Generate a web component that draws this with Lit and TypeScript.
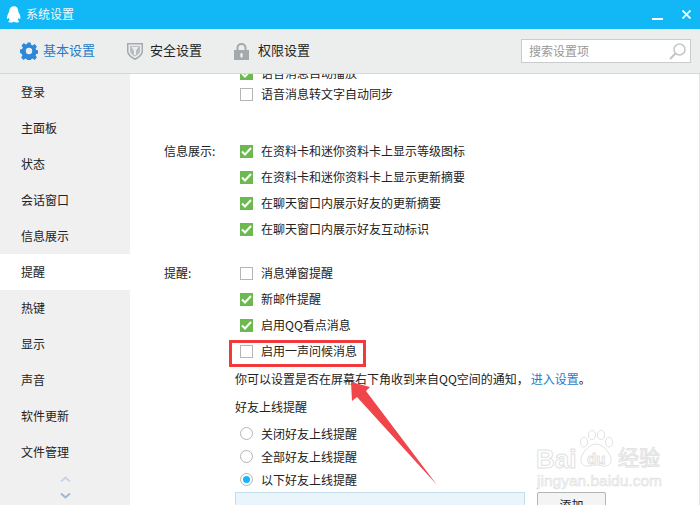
import { LitElement, html, css, svg } from "lit";
import { customElement } from "lit/decorators.js";

const SIDE = ["登录","主面板","状态","会话窗口","信息展示","提醒","热键","显示","声音","软件更新","文件管理"];

const gear = svg`<svg width="18" height="18" viewBox="0 0 18 18"><path fill="#2f87d9" fill-rule="evenodd" d="M7.400 0.500h3.200l.5 2.300 1.500.6 2-1.300 2.300 2.300-1.300 2 .6 1.500 2.300.5v3.200l-2.300.5-.6 1.500 1.300 2-2.300 2.300-2-1.300-1.500.6-.5 2.300H7.400l-.5-2.300-1.500-.6-2 1.300-2.300-2.300 1.300-2-.6-1.500L-.1 10.600V7.400l2.300-.5.6-1.500-1.300-2 2.300-2.300 2 1.300 1.500-.6z" /><circle cx="9" cy="9" r="3.200" fill="#eceeee"/></svg>`;
const shield = svg`<svg width="16" height="18" viewBox="0 0 16 18"><path fill="#a3a9ad" d="M0 1h16v8c0 4-3.500 7-8 9-4.500-2-8-5-8-9z"/><path fill="#eceeee" d="M1.500 2.500h13V9c0 3-2.900 5.300-6.500 7.300C4.400 14.300 1.500 12 1.500 9z"/><path fill="#b8bcc0" d="M3 4h10v5c0 2.300-2.200 4-5 5.600C5.200 13 3 11.300 3 9z"/><path fill="#eceeee" d="M4.500 5h7L9 8.500V13H7V8.500z"/></svg>`;
const lock = svg`<svg width="15" height="17" viewBox="0 0 15 17"><path fill="none" stroke="#a3a9ad" stroke-width="2" d="M3.500 8V4.500a4 3.500 0 0 1 8 0V8"/><rect y="7" width="15" height="10" fill="#a3a9ad"/><rect x="6.300" y="10" width="2.400" height="4.500" rx="1" fill="#eceeee"/></svg>`;
const penguin = svg`<svg width="14" height="17" viewBox="0 0 17 20"><path fill="#fff" d="M8.500 0c3.200 0 5 2.500 5.100 5.500.1 1.500.6 2 1.200 3.200 1.200 2.300 1.900 5 1.300 6.500-.4.800-1.300-.2-1.900-1.200-.2 1.300-.8 2.300-1.500 3 1 .4 2 .9 2 1.600 0 .9-2 1.400-3.700 1.200-1-.1-1.700-.5-2.300-.9h-.6c-.6.400-1.300.8-2.300.9C3.500 20 1.600 19.500 1.600 18.600c0-.7 1-1.200 2-1.600-.7-.7-1.300-1.700-1.500-3-.6 1-1.500 2-1.900 1.200-.6-1.500.1-4.200 1.300-6.500.6-1.200 1.100-1.700 1.200-3.200C2.800 2.500 5.300 0 8.500 0z"/></svg>`;
const search = svg`<svg width="17" height="17" viewBox="0 0 17 17"><circle cx="10.500" cy="6.500" r="5.500" fill="none" stroke="#c6c6c6" stroke-width="1.500"/><path d="M6.500 10.500L1 16" stroke="#c6c6c6" stroke-width="2.200" fill="none"/></svg>`;

@customElement("app-root")
export class AppRoot extends LitElement {
  static styles = css`
    :host { display: block; width: 700px; height: 505px; position: relative; overflow: hidden; background: #fff;
      font-family: "Noto Sans CJK SC", "Liberation Sans", sans-serif; font-size: 12px; color: #222; }
    .title { height: 29px; background: #12b7f5; display: flex; align-items: center; color: #fff; padding-left: 7px; box-sizing: border-box; }
    .title svg { display: block; }
    .title .name { margin-left: 5px; flex: 1; opacity: .95; margin-top: -2px; }
    .win { display: flex; align-items: center; gap: 19px; padding-right: 9px; }
    .min { width: 11px; height: 2px; background: #fff; margin-top: 8px; }
    .tools { height: 45px; background: #eceeee; border-bottom: 1px solid #d6d8d8; box-sizing: border-box; display: flex; align-items: center; padding-left: 20px; }
    .tab { display: flex; align-items: center; font-size: 13px; line-height: 18px; color: #222; }
    .tab span { margin-top: -2px; }
    .tab svg { display: block; }
    .tab.on { color: #1f7cc9; width: 107px; }
    .tab.on svg { margin-right: 5px; }
    .tab.sec { width: 107px; }
    .tab.sec svg { margin-right: 7px; }
    .tab.perm svg { margin-right: 9px; }
    .spacer { flex: 1; }
    .search { width: 170px; height: 24px; margin-right: 9px; box-sizing: border-box; border: 1px solid #c9cccc; background: #fff; display: flex; align-items: center; padding: 0 4px 0 7px; color: #999; }
    .search span { flex: 1; margin-top: -1px; }
    .body { display: flex; height: 431px; }
    .side { width: 130px; background: #f0f0f0; display: flex; flex-direction: column; flex: none; }
    .item { height: 36px; line-height: 36px; padding-left: 21px; flex: none; }
    .item.on { background: #fff; }
    .chev { display: flex; flex-direction: column; align-items: center; gap: 11px; margin-top: 6px; }
    .chev svg { display: block; }
    .main { flex: 1; overflow: hidden; border-right: 1px solid #e4e4e4; }
    .scroll { margin-top: -14px; padding-left: 34px; }
    .row { display: flex; height: 26px; align-items: center; }
    .row.first { margin-bottom: -5px; }
    .row span.t, .lab { margin-top: -1px; }
    .lab { width: 76px; flex: none; }
    .group { display: flex; flex-direction: column; }
    .gap1 { margin-top: 31px; }
    .gap2 { margin-top: 18px; }
    .box { width: 13px; height: 13px; box-sizing: border-box; margin-right: 8px; flex: none; border: 1px solid #b5b5b5; background: #fff; }
    .box.on { background: #6cb94f; border: 0; display: flex; align-items: center; justify-content: center; }
    .box svg { display: block; }
    .note { height: 29px; margin-left: 71px; display: flex; align-items: center; white-space: nowrap; }
    .note a { color: #1f7cc9; margin-left: 2px; }
    .friend { height: 26px; margin-left: 71px; display: flex; align-items: center; }
    .radios { margin-top: 3px; }
    .radio { height: 23px; display: flex; align-items: center; margin-left: 76px; }
    .r { width: 13px; height: 13px; box-sizing: border-box; border: 1px solid #b5b5b5; border-radius: 50%; margin-right: 8px; flex: none; background: #fff; display: flex; align-items: center; justify-content: center; }
    .r i { width: 7px; height: 7px; border-radius: 50%; background: #12b7f5; display: block; }
    .bottom { display: flex; margin-left: 71px; margin-top: 1px; }
    .list { width: 290px; height: 60px; box-sizing: border-box; background: #eaf5fb; border: 1px solid #c6deec; }
    .add { margin-left: 12px; width: 69px; height: 26px; box-sizing: border-box; border: 1px solid #b4b4b4; border-radius: 2px; background: #f4f4f4; text-align: center; line-height: 24px; }
    .redbox { position: absolute; left: 229px; top: 340px; width: 137px; height: 27px; box-sizing: border-box; border: 3px solid #f23a3c; }
    .arrow { position: absolute; left: 340px; top: 375px; display: block; }
    .mark { position: absolute; left: 536px; top: 430px; width: 130px; height: 60px; color: #fff; -webkit-text-stroke: 1px #e2e2e2; font-family: "Liberation Sans", "Noto Sans CJK SC", sans-serif; }
    .mark .paw { position: absolute; left: 40px; top: 0; display: block; }
    .mark .l1 { position: absolute; left: 0; top: 14px; font-size: 26px; line-height: 30px; font-weight: 700; white-space: nowrap; }
    .mark .du { position: absolute; left: 51px; top: 19px; font-size: 15px; line-height: 20px; font-weight: 700; white-space: nowrap; }
    .mark .cn { position: absolute; left: 82px; top: 15px; font-size: 21px; line-height: 26px; white-space: nowrap; }
    .mark .l2 { position: absolute; left: 1px; top: 42px; font-size: 15.500px; line-height: 18px; white-space: nowrap; -webkit-text-stroke: .5px #dcdcdc; color: #f6f6f6; }
  `;

  private check(on: boolean) {
    return on
      ? html`<span class="box on"><svg width="11" height="9" viewBox="0 0 11 9"><path d="M1 4.500L4 7.500 10 1" fill="none" stroke="#fff" stroke-width="2"/></svg></span>`
      : html`<span class="box"></span>`;
  }
  private row(label: string, on: boolean, text: string, cls = "") {
    return html`<div class="row ${cls}"><span class="lab">${label}</span>${this.check(on)}<span class="t">${text}</span></div>`;
  }
  private radio(on: boolean, text: string) {
    return html`<div class="radio"><span class="r">${on ? html`<i></i>` : ""}</span><span>${text}</span></div>`;
  }

  render() {
    return html`
      <div class="title">${penguin}<span class="name">系统设置</span>
        <div class="win"><span class="min"></span>
          <svg width="9" height="9" viewBox="0 0 9 9"><path d="M.5.500l8 8M8.500.500l-8 8" stroke="#fff" stroke-width="1.800"/></svg>
        </div>
      </div>
      <div class="tools">
        <div class="tab on">${gear}<span>基本设置</span></div>
        <div class="tab sec">${shield}<span>安全设置</span></div>
        <div class="tab perm">${lock}<span>权限设置</span></div>
        <div class="spacer"></div>
        <div class="search"><span>搜索设置项</span>${search}</div>
      </div>
      <div class="body">
        <div class="side">
          ${SIDE.map((s) => html`<div class="item ${s === "提醒" ? "on" : ""}">${s}</div>`)}
          <div class="chev">
            <svg width="11" height="6" viewBox="0 0 11 6"><path d="M1 5.500L5.500 1.500 10 5.500" fill="none" stroke="#c6d4e6" stroke-width="2"/></svg>
            <svg width="11" height="6" viewBox="0 0 11 6"><path d="M1 .5L5.500 4.500 10 .5" fill="none" stroke="#9db6da" stroke-width="2"/></svg>
          </div>
        </div>
        <div class="main"><div class="scroll">
          <div class="group">
            ${this.row("", true, "语音消息自动播放", "first")}
            ${this.row("", false, "语音消息转文字自动同步")}
          </div>
          <div class="group gap1">
            ${this.row("信息展示:", true, "在资料卡和迷你资料卡上显示等级图标")}
            ${this.row("", true, "在资料卡和迷你资料卡上显示更新摘要")}
            ${this.row("", true, "在聊天窗口内展示好友的更新摘要")}
            ${this.row("", true, "在聊天窗口内展示好友互动标识")}
          </div>
          <div class="group gap2">
            ${this.row("提醒:", false, "消息弹窗提醒")}
            ${this.row("", true, "新邮件提醒")}
            ${this.row("", true, "启用QQ看点消息")}
            ${this.row("", false, "启用一声问候消息")}
          </div>
          <div class="note"><span>你可以设置是否在屏幕右下角收到来自QQ空间的通知，</span><a>进入设置</a><span>。</span></div>
          <div class="friend">好友上线提醒</div>
          <div class="radios">
            ${this.radio(false, "关闭好友上线提醒")}
            ${this.radio(false, "全部好友上线提醒")}
            ${this.radio(true, "以下好友上线提醒")}
          </div>
          <div class="bottom"><div class="list"></div><div class="add">添加</div></div>
        </div></div>
      </div>
      <div class="redbox"></div>
      <svg class="arrow" width="100" height="115" viewBox="340 375 100 115"><path fill="#f0454a" d="M351 382L352 401 357 397 437 485 366 391 370 387z"/></svg>
      <div class="mark">
        <svg class="paw" width="40" height="48" viewBox="0 0 40 48"><g fill="#fff" stroke="#e2e2e2"><ellipse cx="8" cy="12" rx="3.500" ry="5"/><ellipse cx="16" cy="5" rx="3.500" ry="4.500"/><ellipse cx="25" cy="5" rx="3.500" ry="4.500"/><ellipse cx="33" cy="12" rx="3.500" ry="5"/><path d="M20 14c6 0 14 8 15 15 .6 5-4 8-8 7-3-.6-5-1-7-1s-4 .4-7 1c-4 1-8.600-2-8-7C6 22 14 14 20 14z"/></g></svg>
        <span class="l1">Bai</span>
        <span class="du">du</span>
        <span class="cn">经验</span>
        <span class="l2">jingyan.baidu.com</span>
      </div>
    `;
  }
}
